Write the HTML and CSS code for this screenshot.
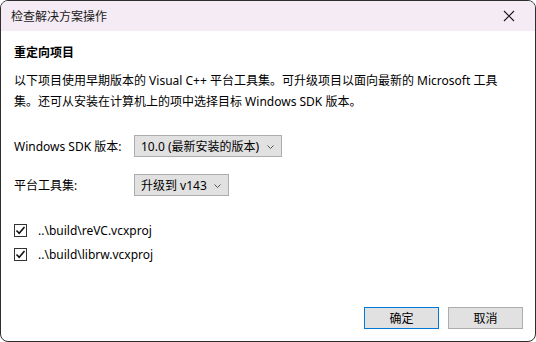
FILE: index.html
```html
<!DOCTYPE html>
<html lang="zh-CN">
<head>
    <meta charset="UTF-8">
    <title>检查解决方案操作</title>
    <link rel="stylesheet" href="styles.css">
</head>
<body>
    <div class="window">
        <div class="titlebar">
            <span class="title">检查解决方案操作</span>
            <svg class="close" width="12" height="12" viewBox="0 0 12 12">
                <path d="M1 1 L11 11 M11 1 L1 11" stroke="#1a1a1a" stroke-width="1.1" fill="none"/>
            </svg>
        </div>
        <div class="content">
            <h3>重定向项目</h3>
            <p class="desc">以下项目使用早期版本的 Visual C++ 平台工具集。可升级项目以面向最新的 Microsoft 工具集。还可从安装在计算机上的项中选择目标 Windows SDK 版本。</p>

            <div class="field">
                <span class="label">Windows SDK 版本:</span>
                <div class="select sdk">
                    <span>10.0 (最新安装的版本)</span>
                    <svg width="7" height="4" viewBox="0 0 7 4"><path d="M0.5 0.5 L3.5 3.5 L6.5 0.5" stroke="#555" fill="none"/></svg>
                </div>
            </div>
            <div class="field">
                <span class="label">平台工具集:</span>
                <div class="select toolset">
                    <span>升级到 v143</span>
                    <svg width="7" height="4" viewBox="0 0 7 4"><path d="M0.5 0.5 L3.5 3.5 L6.5 0.5" stroke="#555" fill="none"/></svg>
                </div>
            </div>

            <div class="projects">
                <div class="check-row">
                    <span class="box"><svg width="11" height="11" viewBox="0 0 11 11"><path d="M1.5 5.5 L4.2 8.3 L9.5 2" stroke="#111" stroke-width="1.6" fill="none"/></svg></span>
                    <span>..\build\reVC.vcxproj</span>
                </div>
                <div class="check-row">
                    <span class="box"><svg width="11" height="11" viewBox="0 0 11 11"><path d="M1.5 5.5 L4.2 8.3 L9.5 2" stroke="#111" stroke-width="1.6" fill="none"/></svg></span>
                    <span>..\build\librw.vcxproj</span>
                </div>
            </div>

            <div class="buttons">
                <button class="btn primary">确定</button>
                <button class="btn">取消</button>
            </div>
        </div>
    </div>
</body>
</html>
```

FILE: styles.css
```css
body {
    margin: 0;
    background: #fff;
    font-family: "Noto Sans", "Noto Sans CJK SC", sans-serif;
    font-size: 12px;
    color: #000;
}
.window {
    width: 536px;
    height: 342px;
    box-sizing: border-box;
    border: 1px solid #2e2e2e;
    border-radius: 8px;
    overflow: hidden;
    display: flex;
    flex-direction: column;
    background: #fff;
}
.titlebar {
    height: 30px;
    background: #f4ebf4;
    display: flex;
    align-items: center;
    justify-content: space-between;
    padding: 0 20px 0 10px;
    flex-shrink: 0;
}
.title {
    font-size: 12px;
    color: #1a1a1a;
}
.close {
    display: block;
}
.content {
    flex: 1;
    display: flex;
    flex-direction: column;
    padding: 12px 12px 12px 13px;
}
h3 {
    margin: 0;
    font-size: 12px;
    font-weight: bold;
    line-height: 20px;
}
.desc {
    margin: 7px 0 0;
    line-height: 21px;
    padding-right: 20px;
}
.field {
    display: flex;
    align-items: center;
    margin-top: 23px;
}
.field + .field {
    margin-top: 17px;
}
.label {
    width: 120px;
}
.select {
    height: 22px;
    box-sizing: border-box;
    background: #e1e1e1;
    border: 1px solid #adadad;
    display: flex;
    align-items: center;
    justify-content: space-between;
    padding: 0 7px 0 6px;
}
.select svg {
    margin-top: 1px;
}
.sdk {
    width: 148px;
}
.toolset {
    width: 95px;
}
.projects {
    margin-top: 24px;
    display: flex;
    flex-direction: column;
    gap: 4px;
}
.check-row {
    display: flex;
    align-items: center;
    height: 20px;
    gap: 11px;
}
.box {
    width: 13px;
    height: 13px;
    box-sizing: border-box;
    border: 1px solid #333;
    background: #fff;
    display: flex;
    align-items: center;
    justify-content: center;
}
.buttons {
    margin-top: auto;
    display: flex;
    justify-content: flex-end;
    gap: 9px;
}
.btn {
    width: 75px;
    height: 22px;
    box-sizing: border-box;
    background: #e1e1e1;
    border: 1px solid #adadad;
    font-family: inherit;
    font-size: 12px;
    color: #000;
    padding: 0;
}
.btn.primary {
    border-color: #0078d7;
}
```
